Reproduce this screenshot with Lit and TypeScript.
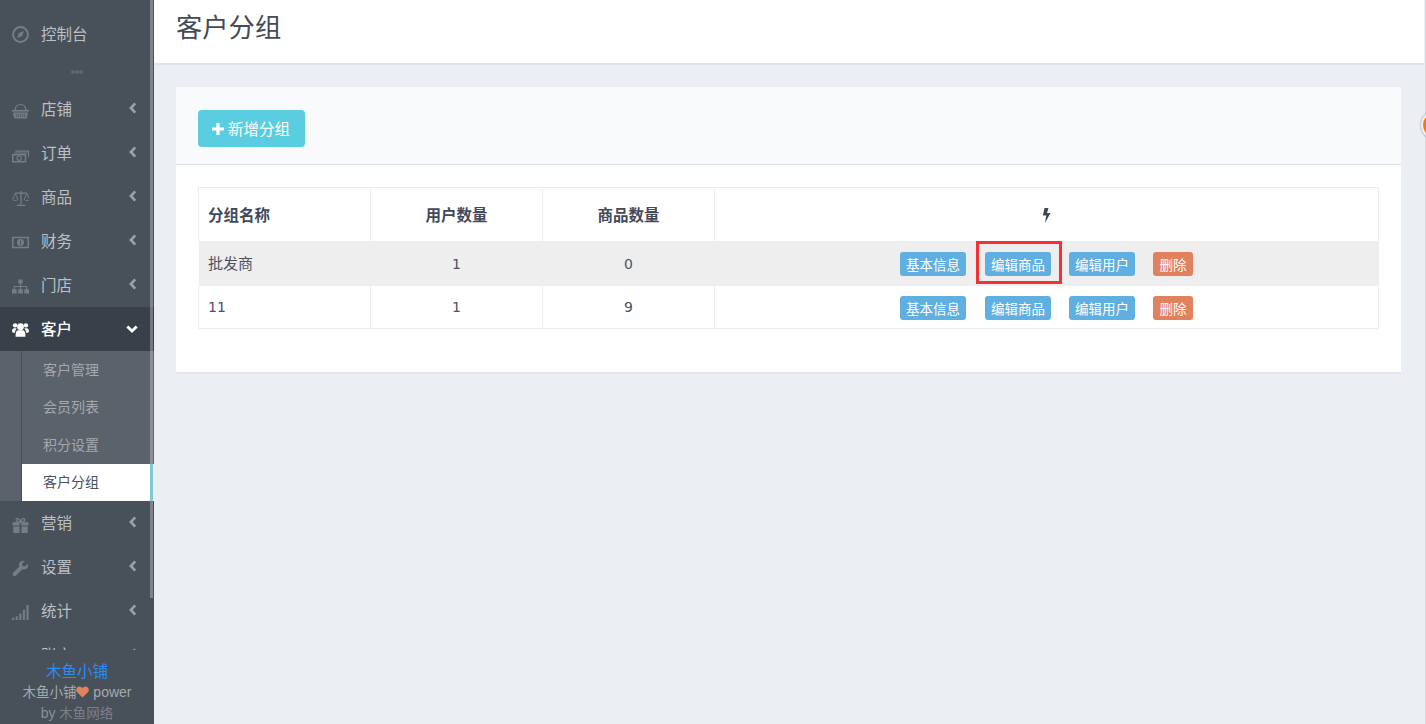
import { LitElement, html, css, svg } from "lit";
import { customElement } from "lit/decorators.js";

const icons: Record<string, unknown> = {
  compass: svg`<circle cx="8" cy="8" r="7" fill="none" stroke="currentColor" stroke-width="1.8"/><path d="M11.4 4.6 L9.4 9.4 L4.6 11.4 L6.6 6.6 Z" fill="currentColor"/>`,
  basket: svg`<path d="M3 7 C3 3 5 1.4 8 1.4 C11 1.4 13 3 13 7" fill="none" stroke="currentColor" stroke-width="1.1"/><path d="M0 6.5h16v1.6H0z" fill="currentColor"/><path d="M1 9h14l-1 5.6H2z" fill="currentColor"/><path d="M4 10v3.4M6 10v3.4M8 10v3.4M10 10v3.4M12 10v3.4" stroke="#48505a" stroke-width=".7"/>`,
  money: svg`<path d="M3 3.2h13v6.4h-1V4.4H3z M1.5 5.1h13v1.1H2.5z" fill="currentColor"/><path d="M.7 7.2h12v6.6H.7z" fill="none" stroke="currentColor" stroke-width="1.4"/><circle cx="6.7" cy="10.5" r="2" fill="none" stroke="currentColor" stroke-width="1"/>`,
  scale: svg`<path d="M8.5 1v12.5M3 3h11M4.5 14.5h8" stroke="currentColor" stroke-width="1.2" fill="none"/><path d="M3 3.2 L.5 8.8 C1.3 10.3 4.7 10.3 5.5 8.8 Z M14 3.2 L11.5 8.8 C12.3 10.3 15.7 10.3 16.5 8.8 Z" fill="none" stroke="currentColor" stroke-width=".9"/>`,
  cash: svg`<path d="M.7 3.2h14.6v9.6H.7z" fill="none" stroke="currentColor" stroke-width="1.4"/><circle cx="8" cy="8" r="3.2" fill="currentColor"/><path d="M7.5 6h1v4h-1z" fill="#48505a"/>`,
  sitemap: svg`<path d="M6 1.5h4v3.6H6zM0 10.5h4.4V14.5H0zM5.8 10.5h4.4V14.5H5.8zM11.6 10.5H16V14.5H11.6z" fill="currentColor"/><path d="M8 5v5.5M2.2 10.5V8h11.6v2.5" fill="none" stroke="currentColor" stroke-width="1.1"/>`,
  users: svg`<circle cx="8" cy="5.4" r="3.2" fill="currentColor"/><circle cx="2.9" cy="4.1" r="2.1" fill="currentColor"/><circle cx="13.1" cy="4.1" r="2.1" fill="currentColor"/><path d="M3.4 14.8 C3.2 10.6 4.4 8.8 6 8.8 H10 C11.6 8.8 12.8 10.6 12.6 14.8 Z" fill="currentColor"/><path d="M0 10 C0 7.6 1 6.8 2.2 6.8 H4.4 C3.6 8 2.8 9.4 2.8 11 H1 Z M16 10 C16 7.6 15 6.8 13.8 6.8 H11.6 C12.4 8 13.2 9.4 13.2 11 H15 Z" fill="currentColor"/>`,
  gift: svg`<path d="M.5 5h6.6v3H.5zM8.9 5h6.6v3H8.9zM1.2 9h5.9v6H1.2zM8.9 9h5.9v6H8.9z" fill="currentColor"/><path d="M8 4.6 C5.4 4.6 3.6 3.9 3.9 2.4 C4.4.6 7 1.2 8 4.6 C9 1.2 11.6.6 12.1 2.4 C12.4 3.9 10.6 4.6 8 4.6 Z" fill="none" stroke="currentColor" stroke-width="1.2"/>`,
  wrench: svg`<path d="M15 3.6 L12.2 6.2 L9.9 5.7 L9.3 3.6 L12 1 C9.8.2 7.4 1.1 6.8 3.2 C6.5 4.3 6.7 5.3 7 6.1 L1.1 12 C.3 12.9.4 13.9 1.1 14.6 C1.9 15.3 3 15.3 3.8 14.5 L9.7 8.6 C11.9 9.3 14.2 8.4 15 6.3 C15.3 5.4 15.3 4.5 15 3.6 Z" fill="currentColor"/>`,
  signal: svg`<path d="M0 13h2v2H0zM3.4 11.5h2V15h-2zM6.8 9h2v6h-2zM10.2 5.5h2V15h-2zM13.6 1h2v14h-2z" fill="currentColor"/>`,
};

const icon = (n: string) => html`<svg class="ic ic-${n}" viewBox="0 0 16 16" aria-hidden="true">${icons[n]}</svg>`;
const chevL = html`<svg class="chev" viewBox="0 0 8 12"><path d="M6.2 1.4 L1.9 6 L6.2 10.6" fill="none" stroke="currentColor" stroke-width="2.6"/></svg>`;
const chevD = html`<svg class="chevd" viewBox="0 0 12 8"><path d="M1.3 1.4 L6 6 L10.7 1.4" fill="none" stroke="currentColor" stroke-width="2.8"/></svg>`;

@customElement("app-root")
export class AppRoot extends LitElement {
  static styles = css`
    :host { display: block; width: 1426px; height: 724px; overflow: hidden; position: relative; background: #ebeef3;
      font-family: "DejaVu Sans", "Noto Sans CJK SC", sans-serif; color: #3f4656; font-size: 14px; }
    * { box-sizing: border-box; }
    .layout { display: flex; height: 724px; }
    .side { width: 154px; flex: none; background: #48505a; display: flex; flex-direction: column; position: relative; overflow: hidden; }
    .bar { position: absolute; left: 150px; top: 0; width: 3px; height: 598px; background: rgba(255,255,255,.3); z-index: 3; }
    .menu { height: 650px; overflow: hidden; flex: none; }
    .item { height: 44px; display: flex; align-items: center; padding: 0 17px 0 12px; color: #bcc1c6; font-size: 15.5px; font-family: "Noto Sans CJK SC", sans-serif; }
    .first { height: 45px; margin-top: 11px; }
    .dots { height: 31px; display: flex; justify-content: center; align-items: center; }
    .dots i { width: 4px; height: 4px; background: #5f666f; border-radius: 50%; }
    .ic { width: 17px; height: 17px; color: #777d85; flex: none; margin-right: 12px; margin-top: 2px; }
    .ic-basket, .ic-money, .ic-gift { margin-top: 4px; }
    .lbl { flex: 1; padding-bottom: 2px; }
    .chev { width: 8px; height: 12px; color: #9ca1a7; margin-bottom: 2px; }
    .chevd { width: 12px; height: 8px; color: #fff; margin-right: -1px; }
    .active { background: #39404a; color: #fff; font-weight: 500; }
    .active .ic { color: #fff; margin-top: 0; }
    .sub { background: #5b626c; padding-left: 21px; }
    .sub-in { border-left: 1px solid #474e58; }
    .sub-i { height: 37.5px; display: flex; align-items: center; padding: 0 0 2px 21px; font-size: 14px; color: #a4a9af; font-family: "Noto Sans CJK SC", sans-serif; }
    .sub-i.on { background: #fff; color: #4a505b; position: relative; }
    .sub-i.on::after { content: ""; position: absolute; right: 1px; top: 0; bottom: 0; width: 3px; background: #4cb0be; }
    .foot { flex: 1; background: #48505a; text-align: center; font-family: "Liberation Sans", "Noto Sans CJK SC", sans-serif; font-size: 14px; color: #a5a9ae; padding-top: 11px; }
    .foot div { height: 21px; line-height: 21px; white-space: nowrap; }
    .foot .brand { color: #2d8cf0; font-size: 15.5px; }
    .foot .cn { font-size: 13.5px; }
    .foot .dim { color: #8b9096; }
    .foot .dim .cn { color: #7b8087; }
    .foot svg { width: 13px; height: 12px; vertical-align: -1px; }
    .main { flex: 1; min-width: 0; display: flex; flex-direction: column; }
    .head { height: 65px; background: #fff; border-bottom: 2px solid #dfe3ea; padding: 8px 0 0 22px; flex: none; margin-right: 2px; }
    h1 { margin: 0; font-weight: 400; font-size: 26.3px; line-height: 36px; color: #444a56; font-family: "Noto Sans CJK SC", sans-serif; }
    .card { margin: 22px 25px 0 22px; background: #fff; height: 287px; border-bottom: 2px solid #e3e6ec; }
    .card-h { height: 78px; background: #f9fafc; border-bottom: 1px solid #dde2ec; padding: 23px 0 0 22px; }
    .add { display: inline-flex; align-items: center; height: 37px; width: 107px; padding: 0 0 2px 14px; background: #5bcde0; color: #fff; border-radius: 4px; font-size: 15.5px; font-family: "Noto Sans CJK SC", sans-serif; }
    .add svg { width: 12px; height: 12px; margin: 2px 4px 0 0; }
    .card-b { padding: 22px 22px 0; }
    table { width: 1181px; border-collapse: collapse; table-layout: fixed; }
    th, td { border: 1px solid #ebedf1; text-align: center; padding: 0; }
    th { height: 54px; font-weight: 700; font-size: 15.5px; padding-bottom: 2px; font-family: "Noto Sans CJK SC", sans-serif; color: #43495a; }
    td { height: 44px; font-size: 14px; color: #4c5263; }
    tr.last td { height: 43px; }
    tr.hl td { background: #eeeeee; border-color: transparent; }
    .l { text-align: left; padding-left: 9px; }
    td.cj { font-family: "Noto Sans CJK SC", sans-serif; font-size: 15px; padding-bottom: 2px; }
    .ops { display: flex; justify-content: center; align-items: center; gap: 18px; position: relative; padding-top: 1px; }
    .btn { display: inline-block; width: 66px; text-align: center; height: 24px; line-height: 25px; border-radius: 3px; background: #5fb0e1; color: #fff; font-size: 13.5px; font-family: "Noto Sans CJK SC", sans-serif; position: relative; }
    .btn.a { margin-right: 1px; }
    .btn.d { background: #e1825f; width: 40px; }
    .mark { position: absolute; left: -9px; top: -11px; width: 86px; height: 43px; border: 3px solid #f33333; }
    .bolt { width: 9px; height: 15px; vertical-align: -2px; }
    .rline { position: absolute; left: 1425px; top: 0; bottom: 0; width: 1px; background: #d4d6da; }
    .ball { position: absolute; left: 1421px; top: 110px; width: 30px; height: 30px; border-radius: 50%; background: #ee7a17; border: 2px solid #f3f3f3; box-shadow: 0 0 2px #777; }
  `;

  private row(name: string, u: string, g: string, hl: boolean) {
    const isCj = name !== "11";
    return html`<tr class=${hl ? "hl" : "last"}>
      <td class="l ${isCj ? "cj" : ""}">${name}</td><td>${u}</td><td>${g}</td>
      <td><div class="ops">
        <span class="btn a">基本信息</span>
        <span class="btn">${hl ? html`<span class="mark"></span>` : ""}编辑商品</span>
        <span class="btn">编辑用户</span>
        <span class="btn d">删除</span>
      </div></td></tr>`;
  }

  render() {
    const top = [["basket", "店铺"], ["money", "订单"], ["scale", "商品"], ["cash", "财务"], ["sitemap", "门店"]];
    const low = [["gift", "营销"], ["wrench", "设置"], ["signal", "统计"], ["users", "账户"]];
    const it = ([i, t]: string[]) => html`<div class="item">${icon(i)}<span class="lbl">${t}</span>${chevL}</div>`;
    return html`<div class="layout">
      <aside class="side">
        <div class="bar"></div>
        <nav class="menu">
          <div class="item first">${icon("compass")}<span class="lbl">控制台</span></div>
          <div class="dots"><i></i><i></i><i></i></div>
          ${top.map(it)}
          <div class="item active">${icon("users")}<span class="lbl">客户</span>${chevD}</div>
          <div class="sub"><div class="sub-in">
            <div class="sub-i">客户管理</div>
            <div class="sub-i">会员列表</div>
            <div class="sub-i">积分设置</div>
            <div class="sub-i on">客户分组</div>
          </div></div>
          ${low.map(it)}
        </nav>
        <div class="foot">
          <div class="brand">木鱼小铺</div>
          <div><span class="cn">木鱼小铺</span><svg viewBox="0 0 14 12"><path d="M7 12 L1 6 C-1 3 1 0 3.6 0 C5 0 6.3.8 7 2 C7.7.8 9 0 10.4 0 C13 0 15 3 13 6 Z" fill="#e1825f"/></svg> power</div>
          <div class="dim">by <span class="cn">木鱼网络</span></div>
        </div>
      </aside>
      <main class="main">
        <header class="head"><h1>客户分组</h1></header>
        <section class="card">
          <div class="card-h"><span class="add"><svg viewBox="0 0 12 12"><path d="M4.4 0h3.2v4.4H12v3.2H7.6V12H4.4V7.6H0V4.4h4.4z" fill="#fff"/></svg>新增分组</span></div>
          <div class="card-b">
            <table>
              <colgroup><col style="width:172px"/><col style="width:172px"/><col style="width:172px"/><col/></colgroup>
              <thead><tr>
                <th class="l">分组名称</th><th>用户数量</th><th>商品数量</th>
                <th><svg class="bolt" viewBox="0 0 9 15"><path d="M2.5 0h4L5 5h3.5L3 15l1.2-7.5H.8z" fill="#3f4656"/></svg></th>
              </tr></thead>
              <tbody>${this.row("批发商", "1", "0", true)}${this.row("11", "1", "9", false)}</tbody>
            </table>
          </div>
        </section>
      </main>
    </div>
    <div class="rline"></div>
    <div class="ball"></div>`;
  }
}
